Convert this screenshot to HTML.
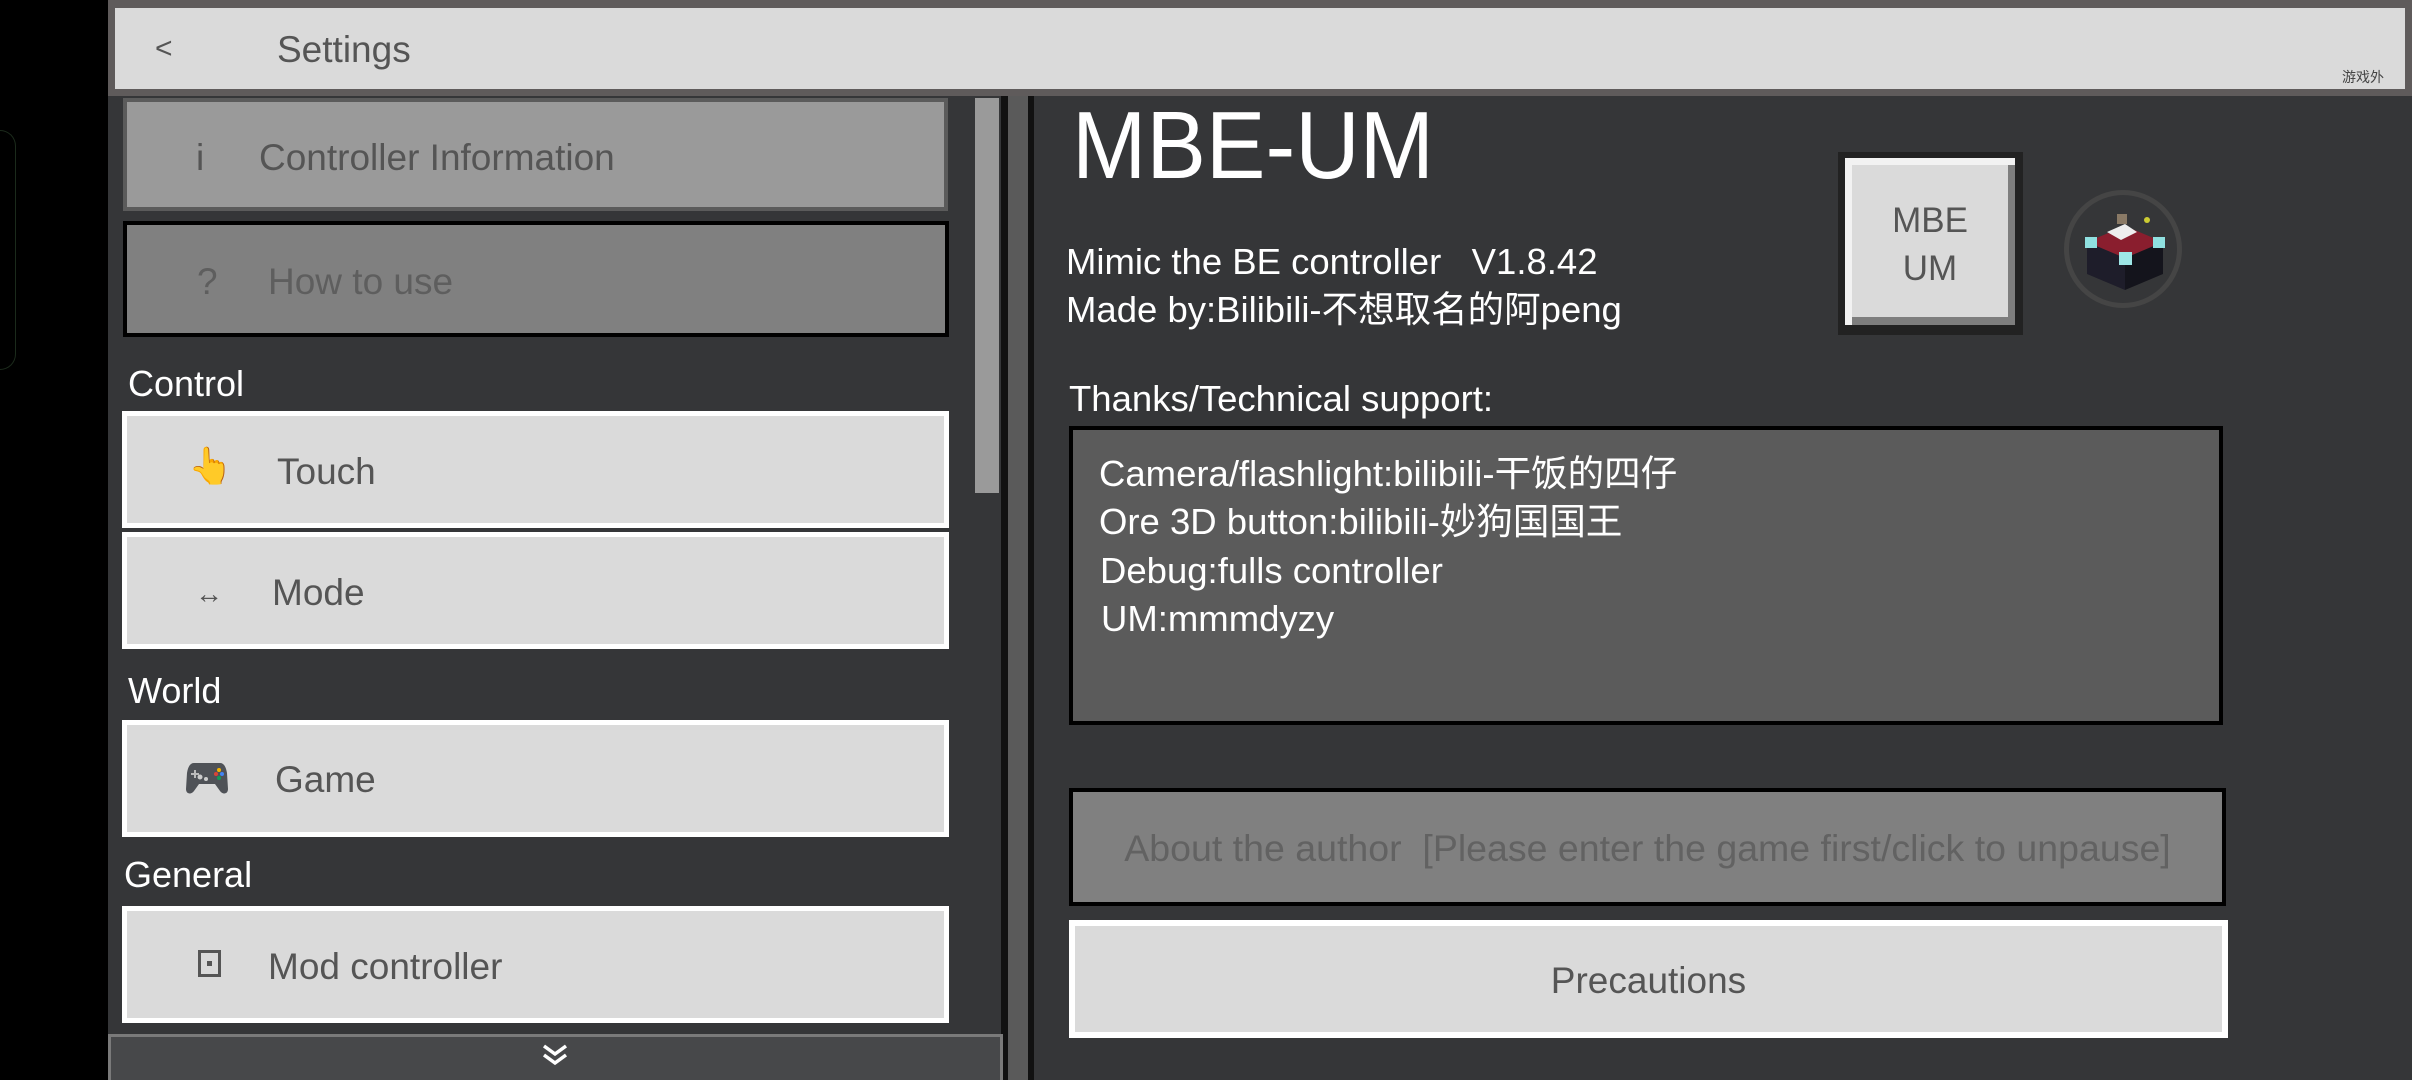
<!DOCTYPE html>
<html><head><meta charset="utf-8"><style>
*{margin:0;padding:0;box-sizing:border-box}
body{width:2412px;height:1080px;background:#000;position:relative;overflow:hidden;font-family:"Liberation Sans","Noto Sans CJK SC",sans-serif}
.a{position:absolute}
.t{position:absolute;white-space:nowrap;line-height:1}
.item{position:absolute;left:122px;width:827px;background:#dadada;border:5px solid #fff}
.lbl{position:absolute;color:#fff;font-size:36px;left:128px;line-height:1}
.wt{color:#fff;font-size:36.5px}
</style></head><body>
<div class="a" style="left:0;top:130px;width:16px;height:240px;border:1px solid #1b2a1b;border-left:none;border-radius:0 16px 16px 0"></div>
<!-- left panel -->
<div class="a" style="left:108px;top:95px;width:900px;height:985px;background:#353638"></div>
<div class="a" style="left:975px;top:98px;width:24px;height:395px;background:#9a9a9a"></div>
<div class="a" style="left:1001px;top:95px;width:7px;height:985px;background:#111"></div>
<div class="a" style="left:1008px;top:95px;width:20px;height:985px;background:#5a5a5a"></div>
<div class="a" style="left:1028px;top:95px;width:6px;height:985px;background:#111"></div>
<div class="a" style="left:1034px;top:95px;width:1378px;height:985px;background:#353638"></div>
<!-- top bar -->
<div class="a" style="left:108px;top:0;width:2304px;height:96px;background:#5f5b5b"></div>
<div class="a" style="left:115px;top:8px;width:2290px;height:81px;background:#dadada"></div>
<div class="t" style="left:155px;top:34px;font-size:30px;color:#555">&lt;</div>
<div class="t" style="left:277px;top:31px;font-size:37px;color:#555">Settings</div>
<div class="t" style="left:2342px;top:70px;font-size:14px;color:#444">游戏外</div>
<!-- items -->
<div class="a" style="left:123px;top:98px;width:825px;height:113px;background:#9a9a9a;border:4px solid #5b5b5b"></div>
<div class="t" style="left:196px;top:139px;font-size:37px;color:#555">i</div>
<div class="t" style="left:259px;top:139px;font-size:37px;color:#555">Controller Information</div>
<div class="a" style="left:123px;top:221px;width:826px;height:116px;background:#808080;border:4px solid #000"></div>
<div class="t" style="left:197px;top:263px;font-size:37px;color:#5e5e5e">?</div>
<div class="t" style="left:268px;top:263px;font-size:37px;color:#5e5e5e">How to use</div>
<div class="lbl" style="top:366px">Control</div>
<div class="item" style="top:411px;height:117px"></div>
<div class="t" style="left:188px;top:448px;font-size:36px">👆</div>
<div class="t" style="left:277px;top:453px;font-size:37px;color:#555">Touch</div>
<div class="item" style="top:532px;height:117px"></div>
<div class="t" style="left:195px;top:580px;font-size:28px;color:#555">↔</div>
<div class="t" style="left:272px;top:574px;font-size:37px;color:#555">Mode</div>
<div class="lbl" style="top:673px">World</div>
<div class="item" style="top:720px;height:117px"></div>
<svg class="a" style="left:186px;top:761px" width="42" height="34" viewBox="0 0 42 34"><path d="M8 2h26c4 0 6 4 7 10l1 16c0 5-5 6-8 2l-5-7H13l-5 7c-3 4-8 3-8-2l1-16C2 6 4 2 8 2z" fill="#4f5257"/><circle cx="14" cy="16" r="2.5" fill="#ccc"/><circle cx="20" cy="18" r="2" fill="#ccc"/><circle cx="33" cy="9" r="2" fill="#f4b400"/><circle cx="30" cy="13" r="2" fill="#db4437"/><circle cx="36" cy="13" r="2" fill="#4285f4"/><circle cx="33" cy="17" r="2" fill="#0f9d58"/><path d="M9 9v8M5 13h8" stroke="#bbb" stroke-width="2"/></svg>
<div class="t" style="left:275px;top:761px;font-size:37px;color:#555">Game</div>
<div class="lbl" style="top:857px;left:124px">General</div>
<div class="item" style="top:906px;height:117px"></div>
<div class="a" style="left:198px;top:950px;width:23px;height:27px;border:3px solid #555"></div>
<div class="a" style="left:207px;top:961px;width:5px;height:5px;background:#555"></div>
<div class="t" style="left:268px;top:948px;font-size:37px;color:#555">Mod controller</div>
<div class="a" style="left:108px;top:1034px;width:895px;height:46px;background:#47484a;border:3px solid #7a7a7a;border-bottom:none"></div>
<svg class="a" style="left:540px;top:1042px" width="30" height="26" viewBox="0 0 30 26"><path d="M4 4l11 8 11-8M4 13l11 8 11-8" stroke="#fff" stroke-width="3.5" fill="none"/></svg>
<!-- right content -->
<div class="t" style="left:1072px;top:98px;font-size:96px;color:#fff;transform:scaleX(0.93);transform-origin:left top">MBE-UM</div>
<div class="t wt" style="left:1066px;top:244px">Mimic the BE controller&nbsp;&nbsp; V1.8.42</div>
<div class="t wt" style="left:1066px;top:292px">Made by:Bilibili-不想取名的阿peng</div>
<div class="a" style="left:1838px;top:152px;width:185px;height:183px;background:#222"></div>
<div class="a" style="left:1845px;top:158px;width:170px;height:167px;background:#f2f2f2"></div>
<div class="a" style="left:1852px;top:165px;width:163px;height:160px;background:#7e7e7e"></div>
<div class="a" style="left:1852px;top:165px;width:156px;height:152px;background:#dadada"></div>
<div class="t" style="left:1850px;top:203px;width:160px;text-align:center;font-size:35px;color:#555">MBE</div>
<div class="t" style="left:1850px;top:251px;width:160px;text-align:center;font-size:35px;color:#555">UM</div>
<div class="a" style="left:2064px;top:190px;width:118px;height:118px;border-radius:50%;border:5px solid #454545"></div>
<svg class="a" style="left:2085px;top:210px" width="80" height="80" viewBox="0 0 80 80">
<path d="M2 32 L40 48 L40 80 L2 64Z" fill="#1e1d2a"/><path d="M78 32 L40 48 L40 80 L78 64Z" fill="#14141c"/>
<path d="M2 32 L40 16 L78 32 L40 48Z" fill="#8a1e2e"/>
<rect x="0" y="27" width="12" height="11" fill="#8fe0e0"/><rect x="68" y="27" width="12" height="11" fill="#8fe0e0"/><rect x="34" y="42" width="13" height="13" fill="#9ee6e6"/>
<path d="M22 22 L40 14 L52 22 L36 30Z" fill="#eee"/><rect x="32" y="4" width="10" height="10" fill="#8a7a66"/><circle cx="62" cy="10" r="3" fill="#cc3"/>
</svg>
<div class="t wt" style="left:1069px;top:381px">Thanks/Technical support:</div>
<div class="a" style="left:1069px;top:426px;width:1154px;height:299px;background:#5b5b5b;border:4px solid #000"></div>
<div class="t wt" style="left:1099px;top:456px">Camera/flashlight:bilibili-干饭的四仔</div>
<div class="t wt" style="left:1099px;top:504px">Ore 3D button:bilibili-妙狗国国王</div>
<div class="t wt" style="left:1100px;top:553px">Debug:fulls controller</div>
<div class="t wt" style="left:1101px;top:601px">UM:mmmdyzy</div>
<div class="a" style="left:1069px;top:788px;width:1157px;height:118px;background:#808080;border:4px solid #000"></div>
<div class="t" style="left:1069px;top:830px;width:1157px;text-align:center;font-size:37.5px;color:#626262">About the author&nbsp; [Please enter the game first/click to unpause]</div>
<div class="a" style="left:1069px;top:920px;width:1159px;height:118px;background:#dadada;border:6px solid #fff"></div>
<div class="t" style="left:1069px;top:962px;width:1159px;text-align:center;font-size:37px;color:#555">Precautions</div>
</body></html>
